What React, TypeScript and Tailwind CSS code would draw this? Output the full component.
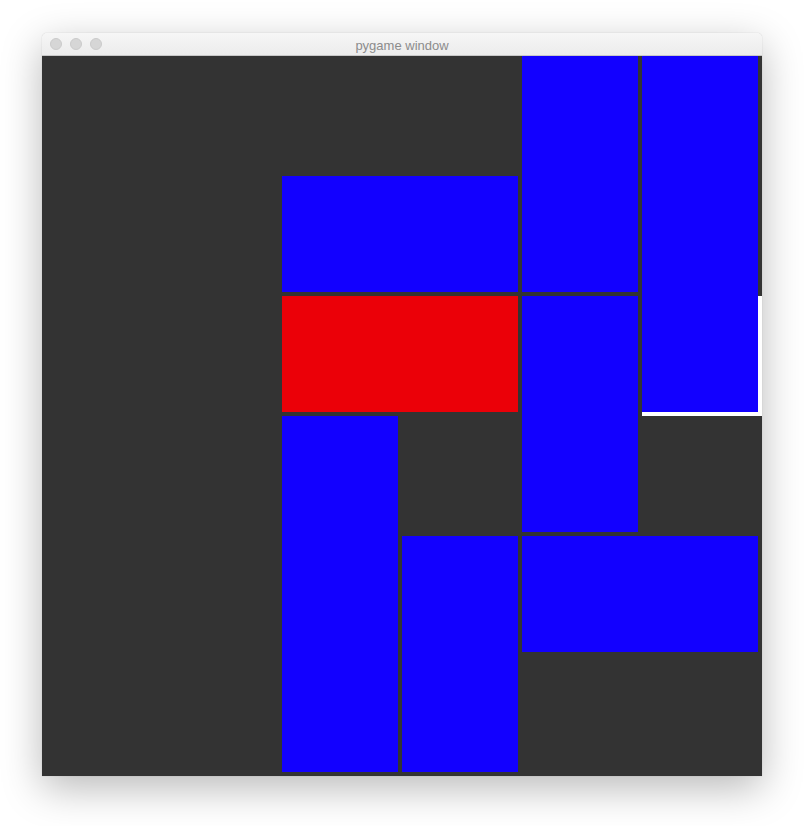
import React from "react"

type Block = { cls: string; red?: boolean }

// grid cells are 120px, each block leaves a 4px gap right and bottom
const blocks: Block[] = [
  { cls: "col-start-3 col-span-2 row-start-2 row-span-1" },
  { cls: "col-start-5 col-span-1 row-start-1 row-span-2" },
  { cls: "col-start-6 col-span-1 row-start-1 row-span-3" },
  { cls: "col-start-3 col-span-2 row-start-3 row-span-1", red: true },
  { cls: "col-start-5 col-span-1 row-start-3 row-span-2" },
  { cls: "col-start-3 col-span-1 row-start-4 row-span-3" },
  { cls: "col-start-4 col-span-1 row-start-5 row-span-2" },
  { cls: "col-start-5 col-span-2 row-start-5 row-span-1" },
]

function TitleBar() {
  return (
    <div className="relative flex h-[23px] items-center rounded-t-[5px] border-b border-[#c8c8c8] bg-gradient-to-b from-[#f6f6f6] to-[#ececec] px-[8px]">
      <div className="flex gap-[8px]">
        <span className="size-[12px] rounded-full bg-[#d6d6d6] border border-[#cbcbcb]" />
        <span className="size-[12px] rounded-full bg-[#d6d6d6] border border-[#cbcbcb]" />
        <span className="size-[12px] rounded-full bg-[#d6d6d6] border border-[#cbcbcb]" />
      </div>
      <div className="flex-1 pr-[52px] pt-[2px] text-center font-['Liberation_Sans',Arial,sans-serif] text-[13px] leading-none text-[#8c8c8c]">
        pygame window
      </div>
    </div>
  )
}

export default function App() {
  return (
    <div className="min-h-[826px] w-[804px] bg-white pl-[42px] pt-[33px]">
      <div className="w-[720px] rounded-t-[5px] shadow-[0_12px_40px_rgba(0,0,0,0.28),0_0_1px_rgba(0,0,0,0.3)]">
        <TitleBar />
        <div className="grid h-[720px] w-[720px] grid-cols-[repeat(6,120px)] grid-rows-[repeat(6,120px)] bg-[#333333]">
          <div className="col-start-6 row-start-3 bg-white" />
          {blocks.map((b, i) => (
            <div key={i} className={`${b.cls} pb-[4px] pr-[4px]`}>
              <div className={`h-full w-full ${b.red ? "bg-[#eb0008]" : "bg-[#1200ff]"}`} />
            </div>
          ))}
        </div>
      </div>
    </div>
  )
}
